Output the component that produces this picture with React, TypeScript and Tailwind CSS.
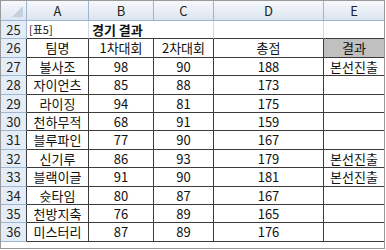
import React from "react";

const rows: [string, number, number, number, string][] = [
  ["불사조", 98, 90, 188, "본선진출"],
  ["자이언츠", 85, 88, 173, ""],
  ["라이징", 94, 81, 175, ""],
  ["천하무적", 68, 91, 159, ""],
  ["블루파인", 77, 90, 167, ""],
  ["신기루", 86, 93, 179, "본선진출"],
  ["블랙이글", 91, 90, 181, "본선진출"],
  ["슛타임", 80, 87, 167, ""],
  ["천방지축", 76, 89, 165, ""],
  ["미스터리", 87, 89, 176, ""],
];

const font = { fontFamily: '"Noto Sans CJK KR", "Liberation Sans", sans-serif' };

// 열 머리글 (A~E)
function ColHead({ label }: { label: string }) {
  return (
    <div className="flex items-center justify-center border-r border-b border-[#9eb6ce] bg-gradient-to-b from-[#f7f9fc] to-[#dbe4ef] text-[13px] text-[#222]">
      {label}
    </div>
  );
}

// 행 번호
function RowHead({ n, dark = false }: { n: number; dark?: boolean }) {
  return (
    <div
      className={
        "flex items-center justify-center border-b border-r border-b-[#9eb6ce] bg-[#e4ecf7] text-[13px] text-[#222] " +
        (dark ? "border-r-[#3c3c3c]" : "border-r-[#9eb6ce]")
      }
    >
      {n}
    </div>
  );
}

function Cell({ children, className = "" }: { children?: React.ReactNode; className?: string }) {
  return (
    <div className={"flex items-center justify-center border-r border-b border-[#3c3c3c] text-[13px] text-[#111] whitespace-nowrap " + className}>
      {children}
    </div>
  );
}

export default function App() {
  return (
    <div className="w-[386px] h-[250px] bg-white" style={font}>
      <div className="w-[385px] h-[249px] border border-[#9a9a9a] overflow-hidden bg-white">
        <div className="grid grid-cols-[26px_62px_65px_60px_110px_61px] grid-rows-[20px_repeat(12,18.42px)]">
          {/* 머리글 줄 */}
          <div className="relative border-r border-b border-[#9eb6ce] bg-gradient-to-b from-[#f7f9fc] to-[#dbe4ef]">
            <svg className="absolute right-[3px] bottom-[3px]" width="11" height="11" viewBox="0 0 11 11">
              <polygon points="11,0 11,11 0,11" fill="#c5d0dd" />
            </svg>
          </div>
          {["A", "B", "C", "D", "E"].map((l) => (
            <ColHead key={l} label={l} />
          ))}

          {/* 25행: 표 제목 */}
          <RowHead n={25} />
          <div className="flex items-center pl-[2px] border-b border-b-[#3c3c3c] border-r border-r-[#d0d7e5] text-[11px] text-[#111]">
            [표5]
          </div>
          <div className="flex items-center pl-[3px] border-b border-b-[#3c3c3c] text-[13px] font-bold text-[#111] whitespace-nowrap overflow-visible">
            경기 결과
          </div>
          <div className="border-b border-b-[#3c3c3c] border-r border-r-[#d0d7e5]" />
          <div className="border-b border-b-[#3c3c3c] border-r border-r-[#d0d7e5]" />
          <div className="border-b border-b-[#3c3c3c] border-r border-r-[#d0d7e5]" />

          {/* 26행: 항목 */}
          <RowHead n={26} dark />
          <Cell>팀명</Cell>
          <Cell>1차대회</Cell>
          <Cell>2차대회</Cell>
          <Cell>총점</Cell>
          <Cell className="bg-[#c0c0c0]">결과</Cell>

          {rows.map(([team, a, b, total, result], i) => (
            <React.Fragment key={team}>
              <RowHead n={27 + i} dark />
              <Cell>{team}</Cell>
              <Cell>{a}</Cell>
              <Cell>{b}</Cell>
              <Cell>{total}</Cell>
              <Cell>{result}</Cell>
            </React.Fragment>
          ))}
        </div>
      </div>
    </div>
  );
}
